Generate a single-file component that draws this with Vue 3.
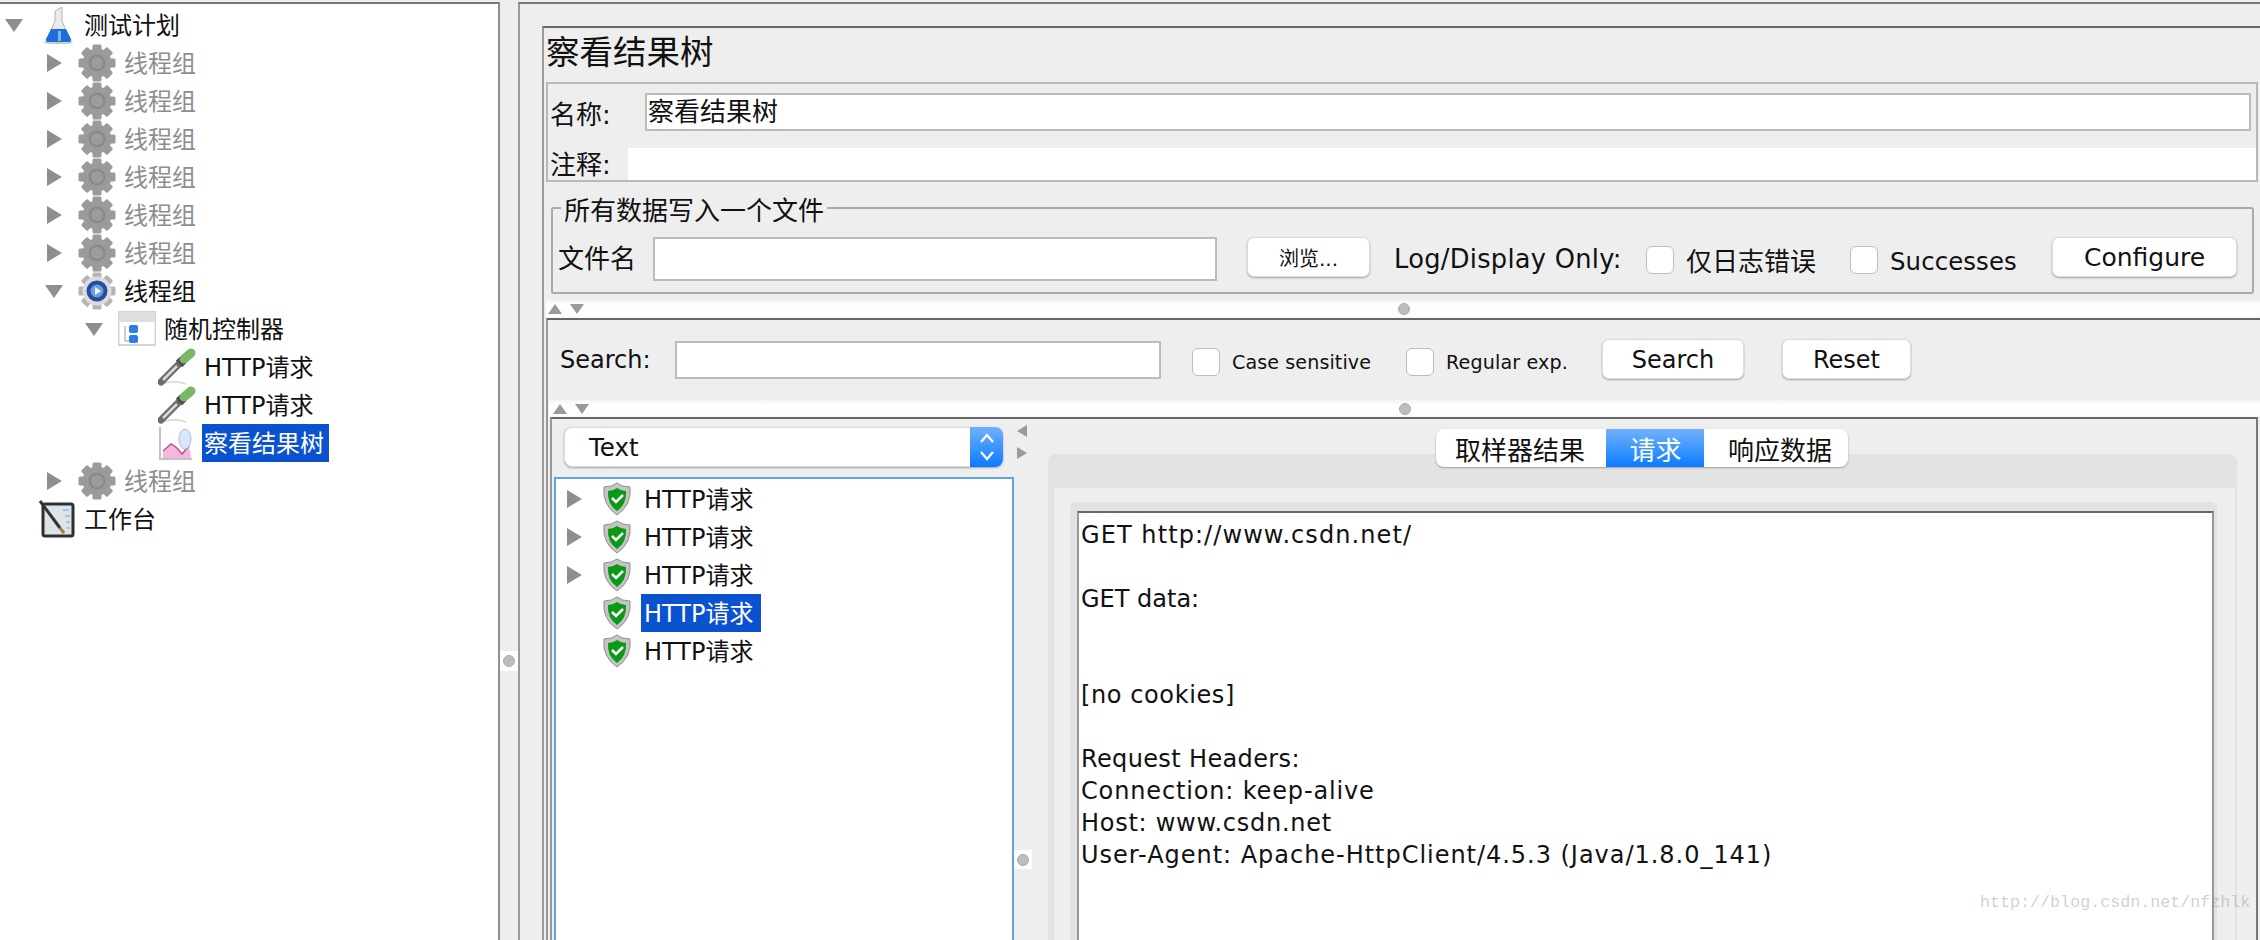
<template>
  <div class="app">
    <svg class="defs" width="0" height="0">
      <defs>
        <g id="teeth">
          <rect v-for="a in [0, 45, 90, 135, 180, 225, 270, 315]" :key="a" x="14.5" y="0.5" width="9" height="8" rx="1.5" :transform="`rotate(${a} 19 19)`" />
        </g>
        <g id="ic-gear-off">
          <use href="#teeth" fill="#9b9b9b" />
          <circle cx="19" cy="19" r="14.5" fill="#9b9b9b" />
          <circle cx="19" cy="19" r="8.5" fill="#8a8a8a" />
          <circle cx="19" cy="19" r="6" fill="#9c9c9c" />
        </g>
        <g id="ic-gear-on">
          <use href="#teeth" fill="#b4b4b4" />
          <circle cx="19" cy="19" r="14.5" fill="#dcdcdc" />
          <circle cx="19" cy="19" r="10.5" fill="#1f4f9e" />
          <circle cx="19" cy="19" r="6.5" fill="#6f9bd8" />
          <path d="M17 15l6 4-6 4z" fill="#f2f6fc" />
        </g>
        <g id="ic-flask">
          <ellipse cx="20" cy="36.5" rx="15" ry="1.5" fill="#c9c9c9" />
          <path d="M17 5l7-4v14l8 19q1 3-2 3H11q-3 0-2-3l8-19z" fill="#e9ebed" stroke="#b5b5b5" />
          <path d="M13 23h15l5 10q1 3-2 3H10q-3 0-2-3z" fill="#1a6fd8" />
          <path d="M20 25h3v10h-3z" fill="#7fb2ee" />
        </g>
        <g id="ic-controller">
          <rect x="0.5" y="2" width="37" height="33" fill="#fff" stroke="#d4d4d4" stroke-width="2" />
          <rect x="1" y="2" width="36" height="10" fill="#dedede" />
          <path d="M7 16v15h5" fill="none" stroke="#9a9a9a" />
          <rect x="11" y="15" width="9" height="8" rx="2" fill="#2c7fe0" />
          <rect x="11" y="25" width="9" height="8" rx="2" fill="#2c7fe0" />
        </g>
        <g id="ic-dropper">
          <path d="M2 37q12-6 26-1" fill="none" stroke="#d4d4d4" stroke-width="1.5" />
          <path d="M3 34l18-18" stroke="#6c6c6c" stroke-width="7" stroke-linecap="round" />
          <path d="M5 32l14-14" stroke="#d9d9d9" stroke-width="2.5" />
          <path d="M21 16l4-4" stroke="#4e4e4e" stroke-width="9" />
          <path d="M26 11l7-6" stroke="#78b866" stroke-width="9" stroke-linecap="round" />
        </g>
        <g id="ic-chart">
          <path d="M2 3v32h32" fill="none" stroke="#c2c2c2" stroke-width="2" />
          <path d="M5 34v-7l8-7 6 4 5 6 7-8 2 12z" fill="#f3b8e2" />
          <path d="M5 27l8-7 6 4 5 6 7-8" fill="none" stroke="#c9488f" stroke-width="1.5" />
          <ellipse cx="27" cy="15" rx="6" ry="10" fill="#d9e6fa" stroke="#a9bedd" />
        </g>
        <g id="ic-bench">
          <rect x="5" y="4" width="30" height="32" rx="2" fill="#dde3e6" stroke="#2f2f2f" stroke-width="3" />
          <path d="M25 10h6M27 16h5M28 22h4M29 28h3" stroke="#9fc3e6" stroke-width="2" />
          <path d="M2 1l20 27" stroke="#333" stroke-width="3" />
          <path d="M22 28l4 5" stroke="#a5793a" stroke-width="3" />
        </g>
        <g id="ic-shield">
          <path d="M15 1q5 4 13 4 2 18-13 28Q0 23 2 5q8 0 13-4z" fill="#c4c4c4" stroke="#8f8f8f" />
          <path d="M15 6q4 3 9 3 1 13-9 20Q5 22 6 9q5 0 9-3z" fill="#0a9a16" />
          <path d="M10 16l4 4 7-7" fill="none" stroke="#fff" stroke-width="2.5" />
        </g>
      </defs>
    </svg>

    <aside class="tree">
      <div v-for="(node, i) in treeNodes" :key="i" class="tree-row" :style="{ paddingLeft: node.level * 40 + 'px' }">
        <span class="arrow-slot"><i v-if="node.arrow" :class="'tri-' + node.arrow"></i></span>
        <svg class="tree-icon" viewBox="0 0 38 38"><use :href="'#' + node.icon" /></svg>
        <span class="tree-label" :class="{ off: node.off, selected: node.selected }">{{ node.label }}</span>
      </div>
    </aside>

    <div class="pane-split"><span class="dot-box"><i class="dot"></i></span></div>

    <main class="main">
      <section class="box">
        <h1 class="title">察看结果树</h1>

        <div class="name-panel">
          <div class="name-row">
            <label class="name-label">名称:</label>
            <div class="field name-field">察看结果树</div>
          </div>
          <div class="comment-row">
            <label class="comment-label">注释:</label>
            <div class="comment-field"></div>
          </div>
        </div>

        <div class="file-group">
          <span class="legend">所有数据写入一个文件</span>
          <span class="txt">文件名</span>
          <div class="field file-field"></div>
          <button class="btn browse">浏览...</button>
          <span class="txt log-label">Log/Display Only:</span>
          <i class="check check-log"></i>
          <span class="txt check-text">仅日志错误</span>
          <i class="check check-succ"></i>
          <span class="txt check-text succ">Successes</span>
          <button class="btn configure">Configure</button>
        </div>

        <div class="splitter first">
          <i class="mini-up"></i><i class="mini-down"></i><i class="dot split-dot-a"></i>
        </div>

        <div class="search-panel">
          <div class="search-row">
            <span class="search-label">Search:</span>
            <div class="field search-field"></div>
            <i class="check check-case"></i>
            <span class="small-text case-text">Case sensitive</span>
            <i class="check check-reg"></i>
            <span class="small-text reg-text">Regular exp.</span>
            <button class="btn search-btn">Search</button>
            <button class="btn reset-btn">Reset</button>
          </div>

          <div class="splitter second">
            <i class="mini-up"></i><i class="mini-down"></i><i class="dot split-dot-b"></i>
          </div>

          <div class="lower">
            <div class="left-col">
              <div class="combo">
                <span class="combo-text">Text</span>
                <span class="stepper">
                  <svg width="16" height="32" viewBox="0 0 16 32" fill="none" stroke="#fff" stroke-width="2.2">
                    <path d="M2 11l6-7 6 7M2 21l6 7 6-7" />
                  </svg>
                </span>
              </div>
              <div class="result-list">
                <div v-for="(r, i) in results" :key="i" class="result-row">
                  <span class="result-arrow"><i v-if="r.arrow" class="tri-right"></i></span>
                  <svg class="shield" viewBox="0 0 30 34"><use href="#ic-shield" /></svg>
                  <span class="result-label" :class="{ selected: r.selected }">HTTP请求</span>
                </div>
              </div>
            </div>

            <div class="v-split">
              <i class="mini-left"></i>
              <i class="mini-right"></i>
              <span class="v-dot"><i class="dot"></i></span>
            </div>

            <div class="right-col">
              <div class="tabs">
                <span class="tab tab-a">取样器结果</span>
                <span class="tab tab-b active">请求</span>
                <span class="tab tab-c">响应数据</span>
              </div>
              <div class="tab-pane">
                <div class="tab-body">
                  <div class="inner-box">
                    <div class="request">
                      <div
                        v-for="(line, i) in requestLines"
                        :key="i"
                        class="request-line"
                        :style="{ letterSpacing: line.spacing + 'px' }"
                      >{{ line.text }}</div>
                    </div>
                  </div>
                </div>
              </div>
            </div>
          </div>
        </div>
      </section>
    </main>

    <span class="watermark">http://blog.csdn.net/nfzhlk</span>
  </div>
</template>

<script setup>
const off = (level = 1) => ({ level, arrow: 'right', icon: 'ic-gear-off', label: '线程组', off: true })

const treeNodes = [
  { level: 0, arrow: 'down', icon: 'ic-flask', label: '测试计划' },
  off(), off(), off(), off(), off(), off(),
  { level: 1, arrow: 'down', icon: 'ic-gear-on', label: '线程组' },
  { level: 2, arrow: 'down', icon: 'ic-controller', label: '随机控制器' },
  { level: 3, icon: 'ic-dropper', label: 'HTTP请求' },
  { level: 3, icon: 'ic-dropper', label: 'HTTP请求' },
  { level: 3, icon: 'ic-chart', label: '察看结果树', selected: true },
  off(),
  { level: 0, icon: 'ic-bench', label: '工作台' },
]

const results = [
  { arrow: true },
  { arrow: true },
  { arrow: true },
  { selected: true },
  {},
]

// the original font runs a little wider than DejaVu, line by line
const requestLines = [
  { text: 'GET http://www.csdn.net/', spacing: 1.08 },
  { text: '\u00a0', spacing: 0 },
  { text: 'GET data:', spacing: 0 },
  { text: '\u00a0', spacing: 0 },
  { text: '\u00a0', spacing: 0 },
  { text: '[no cookies]', spacing: 0.6 },
  { text: '\u00a0', spacing: 0 },
  { text: 'Request Headers:', spacing: 0.36 },
  { text: 'Connection: keep-alive', spacing: 0.85 },
  { text: 'Host: www.csdn.net', spacing: 0.72 },
  { text: 'User-Agent: Apache-HttpClient/4.5.3 (Java/1.8.0_141)', spacing: 0.97 },
]
</script>

<style>
html, body {
  margin: 0;
  overflow: hidden;
}
</style>

<style scoped>
.app {
  position: relative;
  display: flex;
  width: 2260px;
  height: 940px;
  padding-top: 2px;
  box-sizing: border-box;
  overflow: hidden;
  background: #eeeeee;
  color: #111;
  font-family: "DejaVu Sans", "Noto Sans CJK SC", sans-serif;
  font-size: 24px;
}

.defs {
  position: absolute;
}

i {
  display: block;
  flex-shrink: 0;
}

/* left tree */
.tree {
  width: 500px;
  flex-shrink: 0;
  box-sizing: border-box;
  padding-top: 2px;
  background: #fff;
  border-top: 2px solid #777;
  border-right: 2px solid #909090;
}

.tree-row {
  display: flex;
  align-items: center;
  height: 38px;
}

.arrow-slot {
  display: flex;
  align-items: center;
  justify-content: center;
  width: 28px;
  margin-right: 10px;
}

.tri-down {
  border-top: 13px solid #8e8e8e;
  border-left: 9px solid transparent;
  border-right: 9px solid transparent;
}

.tri-right {
  border-left: 15px solid #8e8e8e;
  border-top: 9px solid transparent;
  border-bottom: 9px solid transparent;
}

.tree-icon {
  width: 38px;
  height: 38px;
  flex-shrink: 0;
}

.tree-label {
  height: 38px;
  margin-left: 6px;
  padding: 0 5px 0 2px;
  line-height: 40px;
  white-space: nowrap;
}

.tree-label.off {
  color: #8e8e8e;
}

.selected {
  background: #0b52d0;
  color: #fff;
}

.pane-split {
  position: relative;
  width: 18px;
  flex-shrink: 0;
}

.dot-box {
  position: absolute;
  top: 649px;
  left: 0;
  display: flex;
  align-items: center;
  justify-content: center;
  width: 18px;
  height: 20px;
  background: #fff;
}

.dot {
  width: 12px;
  height: 12px;
  border-radius: 50%;
  background: #bdbdbd;
  border: 1px solid #aaa;
  box-sizing: border-box;
}

/* right side */
.main {
  flex: 1;
  display: flex;
  flex-direction: column;
  min-width: 0;
  padding: 22px 0 0 22px;
  border-top: 2px solid #777;
  border-left: 2px solid #999;
}

.box {
  flex: 1;
  display: flex;
  flex-direction: column;
  min-height: 0;
  border-top: 2px solid #666;
  border-left: 2px solid #999;
}

.title {
  height: 54px;
  margin: 0;
  padding-left: 2px;
  font-size: 33.5px;
  font-weight: 400;
  line-height: 50px;
}

.name-panel {
  margin: 0 2px;
  border: 2px solid #b8b8b8;
  padding: 9px 0 0 2px;
}

.name-row {
  display: flex;
  align-items: center;
  height: 38px;
  padding-right: 5px;
}

.name-label {
  width: 95px;
  flex-shrink: 0;
  font-size: 26px;
}

.field {
  box-sizing: border-box;
  background: #fff;
  border: 2px solid #bbbbbb;
}

.name-field {
  flex: 1;
  height: 38px;
  padding-left: 1px;
  font-size: 26px;
  line-height: 35px;
}

.comment-row {
  display: flex;
  align-items: center;
  height: 32px;
  margin-top: 17px;
}

.comment-label {
  width: 78px;
  flex-shrink: 0;
  margin-top: -3px;
  font-size: 26px;
}

.comment-field {
  flex: 1;
  height: 32px;
  background: #fff;
}

.file-group {
  position: relative;
  display: flex;
  align-items: flex-start;
  box-sizing: border-box;
  height: 87px;
  margin: 25px 6px 0 7px;
  padding: 28px 0 0 5px;
  border: 2px solid #aaa;
  border-radius: 3px;
  font-size: 26px;
}

.legend {
  position: absolute;
  top: -16px;
  left: 8px;
  padding: 0 3px;
  background: #eeeeee;
  line-height: 36px;
  white-space: nowrap;
}

.txt {
  flex-shrink: 0;
  line-height: 44px;
  white-space: nowrap;
}

.file-field {
  width: 564px;
  height: 44px;
  margin-left: 17px;
  flex-shrink: 0;
}

.btn {
  flex-shrink: 0;
  box-sizing: border-box;
  height: 40px;
  padding: 0;
  background: #fff;
  border: 1px solid #dcdcdc;
  border-radius: 7px;
  box-shadow: 0 1px 2px #a5a5a5;
  color: #111;
  font-family: inherit;
  font-size: 24px;
}

.browse {
  width: 123px;
  margin-left: 30px;
  font-size: 20px;
}

.log-label {
  width: 227px;
  margin-left: 24px;
  font-size: 25.7px;
  letter-spacing: 0.28px;
}

.check {
  box-sizing: border-box;
  width: 28px;
  height: 28px;
  flex-shrink: 0;
  background: #fff;
  border: 1px solid #bdbdbd;
  border-radius: 6px;
}

.check-log {
  margin: 9px 0 0 25px;
}

.check-text {
  margin: 3px 0 0 12px;
}

.check-succ {
  margin: 9px 0 0 34px;
}

.succ {
  width: 126px;
  font-size: 24.4px;
  letter-spacing: 0.1px;
}

.configure {
  width: 185px;
  margin-left: 36px;
  font-size: 25px;
}

.splitter {
  display: flex;
  align-items: center;
  flex-shrink: 0;
  background: linear-gradient(#f4f4f4, #ffffff 30%, #fbfbfb);
}

.splitter.first {
  height: 18px;
  margin: 6px 0 0 2px;
  padding-left: 2px;
}

.splitter.second {
  height: 17px;
  margin-left: 1px;
  padding-left: 4px;
}

.mini-up,
.mini-down {
  border-left: 7px solid transparent;
  border-right: 7px solid transparent;
}

.mini-up {
  border-bottom: 10px solid #9a9a9a;
}

.mini-down {
  margin-left: 8px;
  border-top: 10px solid #9a9a9a;
}

.split-dot-a {
  margin-left: 814px;
}

.split-dot-b {
  margin-left: 810px;
}

.search-panel {
  flex: 1;
  display: flex;
  flex-direction: column;
  min-height: 0;
  margin-left: 2px;
  border-top: 2px solid #666;
  border-left: 2px solid #999;
}

.search-row {
  display: flex;
  align-items: flex-start;
  box-sizing: border-box;
  height: 80px;
  padding: 21px 0 0 12px;
  flex-shrink: 0;
}

.search-label {
  width: 90px;
  flex-shrink: 0;
  line-height: 38px;
}

.search-field {
  width: 486px;
  height: 38px;
  margin-left: 25px;
  flex-shrink: 0;
}

.check-case {
  margin: 7px 0 0 31px;
}

.check-reg {
  margin: 7px 0 0 36px;
}

.small-text {
  margin: 3px 0 0 12px;
  flex-shrink: 0;
  font-size: 19.1px;
  line-height: 38px;
  white-space: nowrap;
}

.case-text {
  width: 138px;
  letter-spacing: 0.1px;
}

.reg-text {
  width: 122px;
  letter-spacing: 0.15px;
}

.search-btn {
  width: 142px;
  margin: -2px 0 0 34px;
  padding-top: 2px;
}

.reset-btn {
  width: 129px;
  margin: -2px 0 0 38px;
  padding-top: 2px;
}

.lower {
  flex: 1;
  display: flex;
  min-height: 0;
  margin: 0 2px 0 2px;
  border-top: 2px solid #666;
  border-left: 2px solid #999;
  border-right: 2px solid #777;
}

.left-col {
  display: flex;
  flex-direction: column;
  width: 464px;
  flex-shrink: 0;
}

.combo {
  display: flex;
  box-sizing: border-box;
  width: 439px;
  height: 40px;
  margin: 8px 0 0 12px;
  background: #fff;
  border: 1px solid #dcdcdc;
  border-radius: 8px;
  box-shadow: 0 1px 2px #a5a5a5;
  flex-shrink: 0;
}

.combo-text {
  flex: 1;
  padding-left: 24px;
  font-size: 24.5px;
  line-height: 40px;
}

.stepper {
  display: flex;
  align-items: center;
  justify-content: center;
  width: 33px;
  margin: -1px -1px -1px 0;
  background: linear-gradient(#6fb1fb, #0a7bff);
  border-radius: 0 8px 8px 0;
}

.result-list {
  flex: 1;
  width: 460px;
  box-sizing: border-box;
  margin: 10px 0 0 2px;
  padding-top: 1px;
  background: #fff;
  border: 2px solid #5ca4e6;
  border-bottom: 0;
}

.result-row {
  display: flex;
  align-items: center;
  height: 38px;
  padding-left: 11px;
}

.result-arrow {
  width: 15px;
  margin-right: 20px;
  flex-shrink: 0;
}

.shield {
  width: 30px;
  height: 34px;
  flex-shrink: 0;
}

.result-label {
  height: 38px;
  margin-left: 9px;
  padding: 0 8px 0 3px;
  line-height: 40px;
}

.v-split {
  position: relative;
  display: flex;
  flex-direction: column;
  width: 32px;
  flex-shrink: 0;
  padding: 6px 0 0 1px;
  box-sizing: border-box;
}

.mini-left {
  border-right: 10px solid #9a9a9a;
  border-top: 6px solid transparent;
  border-bottom: 6px solid transparent;
  width: 0;
}

.mini-right {
  margin-top: 10px;
  border-left: 10px solid #9a9a9a;
  border-top: 6px solid transparent;
  border-bottom: 6px solid transparent;
  width: 0;
}

.v-dot {
  position: absolute;
  top: 431px;
  left: -2px;
  display: flex;
  align-items: center;
  justify-content: center;
  width: 18px;
  height: 19px;
  background: #fff;
}

.right-col {
  position: relative;
  flex: 1;
  display: flex;
  flex-direction: column;
  min-width: 0;
  padding: 35px 19px 0 0;
}

.tabs {
  position: absolute;
  top: 10px;
  left: 388px;
  display: flex;
  height: 38px;
  background: #fff;
  border-radius: 8px;
  box-shadow: 0 1px 2px #a0a0a0;
  font-size: 26px;
}

.tab {
  display: flex;
  align-items: center;
  justify-content: center;
  box-sizing: border-box;
}

.tab-a {
  width: 170px;
  padding-right: 2px;
}

.tab-b {
  width: 98px;
  padding-left: 1px;
}

.tab-c {
  width: 144px;
  padding-left: 8px;
}

.tab.active {
  background: linear-gradient(#72b3fb, #0a7bff);
  color: #fff;
}

.tab-pane {
  flex: 1;
  display: flex;
  flex-direction: column;
  min-height: 0;
  padding: 34px 2px 0 6px;
  background: #e3e3e3;
  border-radius: 8px 8px 0 0;
}

.tab-body {
  flex: 1;
  display: flex;
  flex-direction: column;
  min-height: 0;
  padding: 14px 18px 0 16px;
  background: #eeeeee;
}

.inner-box {
  flex: 1;
  display: flex;
  flex-direction: column;
  min-height: 0;
  padding: 9px 3px 0 7px;
  background: #e2e2e2;
  border-radius: 6px 6px 0 0;
}

.request {
  flex: 1;
  padding: 6px 0 0 2px;
  background: #fff;
  border: 2px solid #999;
  border-top-color: #666;
  border-bottom: 0;
}

.request-line {
  line-height: 32px;
  white-space: pre;
}

.watermark {
  position: absolute;
  left: 1980px;
  top: 892px;
  color: rgba(150, 150, 150, 0.45);
  font-family: "Liberation Mono", monospace;
  font-size: 16.7px;
  line-height: 22px;
}
</style>
